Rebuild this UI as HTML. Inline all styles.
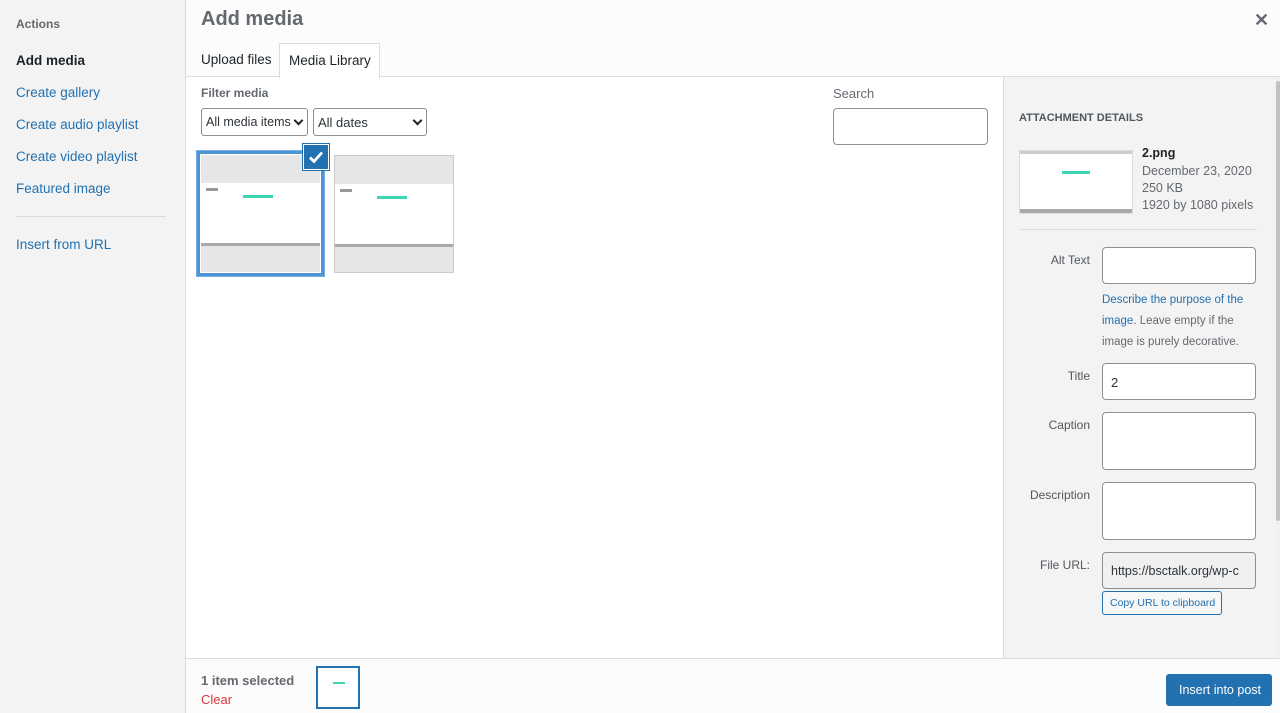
<!DOCTYPE html>
<html><head><meta charset="utf-8"><style>
*{box-sizing:border-box;margin:0;padding:0}
body{width:1280px;height:713px;overflow:hidden;font-family:"Liberation Sans",Arial,sans-serif;font-size:13px;color:#3c434a;background:#fff;position:relative}
.abs{position:absolute}
#side{left:0;top:0;width:186px;height:713px;background:#f3f3f3;border-right:1px solid #dcdcde}
#side div{position:absolute;left:16px;font-size:13.5px;color:#2271b1}
#hdr{left:186px;top:0;width:1094px;height:77px;background:#fcfcfc;border-bottom:1px solid #dcdcde}
.sel{position:absolute;height:28px;border:1px solid #8c8f94;border-radius:3px;background:#fff;font-size:13px;color:#2c3338;padding:6px 4px;white-space:nowrap;overflow:hidden}
.chev{position:absolute;right:5px;top:8px;width:7px;height:7px;border-right:2px solid #222;border-bottom:2px solid #222;transform:rotate(45deg)}
.thumb{position:absolute;background:#e6e6e6;overflow:hidden}
.thumb .pg{position:absolute;left:0;right:0;background:#fff}
.lbl{position:absolute;right:190px;font-size:12px;color:#50575e;text-align:right;width:80px}
.in{position:absolute;left:1102px;width:154px;border:1px solid #8c8f94;border-radius:4px;background:#fff}
</style></head><body>
<div id="side" class="abs">
<div style="top:17px;font-size:12px;font-weight:bold;color:#646970">Actions</div>
<div style="top:53px;font-weight:bold;color:#1d2327">Add media</div>
<div style="top:85px">Create gallery</div>
<div style="top:117px">Create audio playlist</div>
<div style="top:149px">Create video playlist</div>
<div style="top:181px">Featured image</div>
<div style="top:216px;width:150px;height:1px;background:#dcdcde"></div>
<div style="top:237px">Insert from URL</div>
</div>
<div id="hdr" class="abs">
<div class="abs" style="left:15px;top:8px;font-size:20px;font-weight:bold;color:#646970">Add media</div>
<div class="abs" style="left:15px;top:52px;font-size:13.5px;color:#1d2327">Upload files</div>
<div class="abs" style="left:93px;top:43px;width:101px;height:35px;background:#fff;border:1px solid #dcdcde;border-bottom:none;font-size:13.5px;color:#1d2327;padding:9px 0 0 9px">Media Library</div>
<div class="abs" style="left:1068px;top:10px;font-size:18px;font-weight:bold;color:#646970">✕</div>
</div>
<div class="abs" style="left:201px;top:86px;font-size:12px;font-weight:bold;color:#646970">Filter media</div>
<div class="sel" style="left:201px;top:108px;width:107px;font-size:12.5px">All media items<span class="chev"></span></div>
<div class="sel" style="left:313px;top:108px;width:114px">All dates<span class="chev"></span></div>
<div class="abs" style="left:833px;top:86px;font-size:13px;color:#646970">Search</div>
<div class="abs" style="left:833px;top:108px;width:155px;height:37px;border:1px solid #8c8f94;border-radius:4px"></div>

<div class="abs" style="left:197px;top:151px;width:127px;height:125px;border:3px solid #4f94d4;box-shadow:0 0 0 1px #72aee6"></div>
<div class="thumb" style="left:201px;top:155px;width:119px;height:117px"><div class="pg" style="top:28px;height:62px"><div class="abs" style="left:42px;top:12px;width:30px;height:3px;background:#3dd6b5"></div><div class="abs" style="left:5px;top:5px;width:12px;height:3px;background:#999"></div></div><div class="abs" style="left:0;top:88px;width:119px;height:3px;background:#aaa"></div></div>
<div class="abs" style="left:303px;top:144px;width:26px;height:26px;background:#2271b1;border:1px solid #fff;box-shadow:0 0 0 1px #2271b1"><svg width="24" height="24" viewBox="0 0 24 24"><path d="M6 12.5l4 4 8-9" stroke="#fff" stroke-width="2.8" fill="none"/></svg></div>
<div class="thumb" style="left:334px;top:155px;width:120px;height:118px;border:1px solid #ccc"><div class="pg" style="top:28px;height:62px"><div class="abs" style="left:42px;top:12px;width:30px;height:3px;background:#3dd6b5"></div><div class="abs" style="left:5px;top:5px;width:12px;height:3px;background:#999"></div></div><div class="abs" style="left:0;top:88px;width:119px;height:3px;background:#aaa"></div></div>

<div class="abs" style="left:1003px;top:77px;width:272px;height:582px;background:#f3f3f3;border-left:1px solid #dcdcde"></div>
<div class="abs" style="left:1275px;top:77px;width:5px;height:582px;background:#f0f0f0"><div class="abs" style="left:1px;top:4px;width:4px;height:440px;background:#c1c1c1;border-radius:2px"></div></div>
<div class="abs" style="left:1019px;top:112px;font-size:11px;font-weight:bold;color:#50575e">ATTACHMENT DETAILS</div>
<div class="abs" style="left:1019px;top:150px;width:114px;height:64px;background:#fff;border:1px solid #ddd"><div class="abs" style="left:0;top:0;width:112px;height:3px;background:#ccc"></div><div class="abs" style="left:42px;top:20px;width:28px;height:3px;background:#3dd6b5"></div><div class="abs" style="left:0;top:58px;width:112px;height:4px;background:#aaa"></div></div>
<div class="abs" style="left:1142px;top:146px;font-size:12.5px;font-weight:bold;color:#1d2327">2.png</div>
<div class="abs" style="left:1142px;top:163px;font-size:12.5px;color:#646970;line-height:17px">December 23, 2020<br>250 KB<br>1920 by 1080 pixels</div>
<div class="abs" style="left:1019px;top:229px;width:238px;height:1px;background:#dcdcde"></div>
<div class="lbl" style="top:253px">Alt Text</div>
<div class="in" style="top:247px;height:37px"></div>
<div class="abs" style="left:1102px;top:290px;width:160px;font-size:11.5px;line-height:21px;color:#646970"><span style="color:#2271b1">Describe the purpose of the image</span>. Leave empty if the image is purely decorative.</div>
<div class="lbl" style="top:369px">Title</div>
<div class="in" style="top:363px;height:37px;padding:11px 8px;font-size:13px;color:#2c3338">2</div>
<div class="lbl" style="top:418px">Caption</div>
<div class="in" style="top:412px;height:58px"></div>
<div class="lbl" style="top:488px">Description</div>
<div class="in" style="top:482px;height:58px"></div>
<div class="lbl" style="top:558px">File URL:</div>
<div class="in" style="top:552px;height:37px;background:#f0f0f1;padding:11px 8px;font-size:12.5px;color:#2c3338;white-space:nowrap;overflow:hidden">https://bsctalk.org/wp-c</div>
<div class="abs" style="left:1102px;top:591px;width:120px;height:24px;border:1px solid #2271b1;border-radius:3px;background:#f6f7f7;color:#2271b1;font-size:10.5px;padding:5px 0 0 7px">Copy URL to clipboard</div>

<div class="abs" style="left:186px;top:658px;width:1094px;height:55px;background:#fcfcfc;border-top:1px solid #dcdcde"></div>
<div class="abs" style="left:201px;top:673px;font-size:13px;font-weight:bold;color:#646970">1 item selected</div>
<div class="abs" style="left:201px;top:692px;font-size:13px;color:#d63638">Clear</div>
<div class="abs" style="left:316px;top:666px;width:44px;height:43px;border:2px solid #2271b1;background:#fff"><div class="abs" style="left:15px;top:14px;width:12px;height:2px;background:#3dd6b5"></div></div>
<div class="abs" style="left:1166px;top:674px;width:106px;height:32px;background:#2271b1;border-radius:3px;color:#fff;font-size:12.5px;padding:9px 0 0 13px">Insert into post</div>
</body></html>
